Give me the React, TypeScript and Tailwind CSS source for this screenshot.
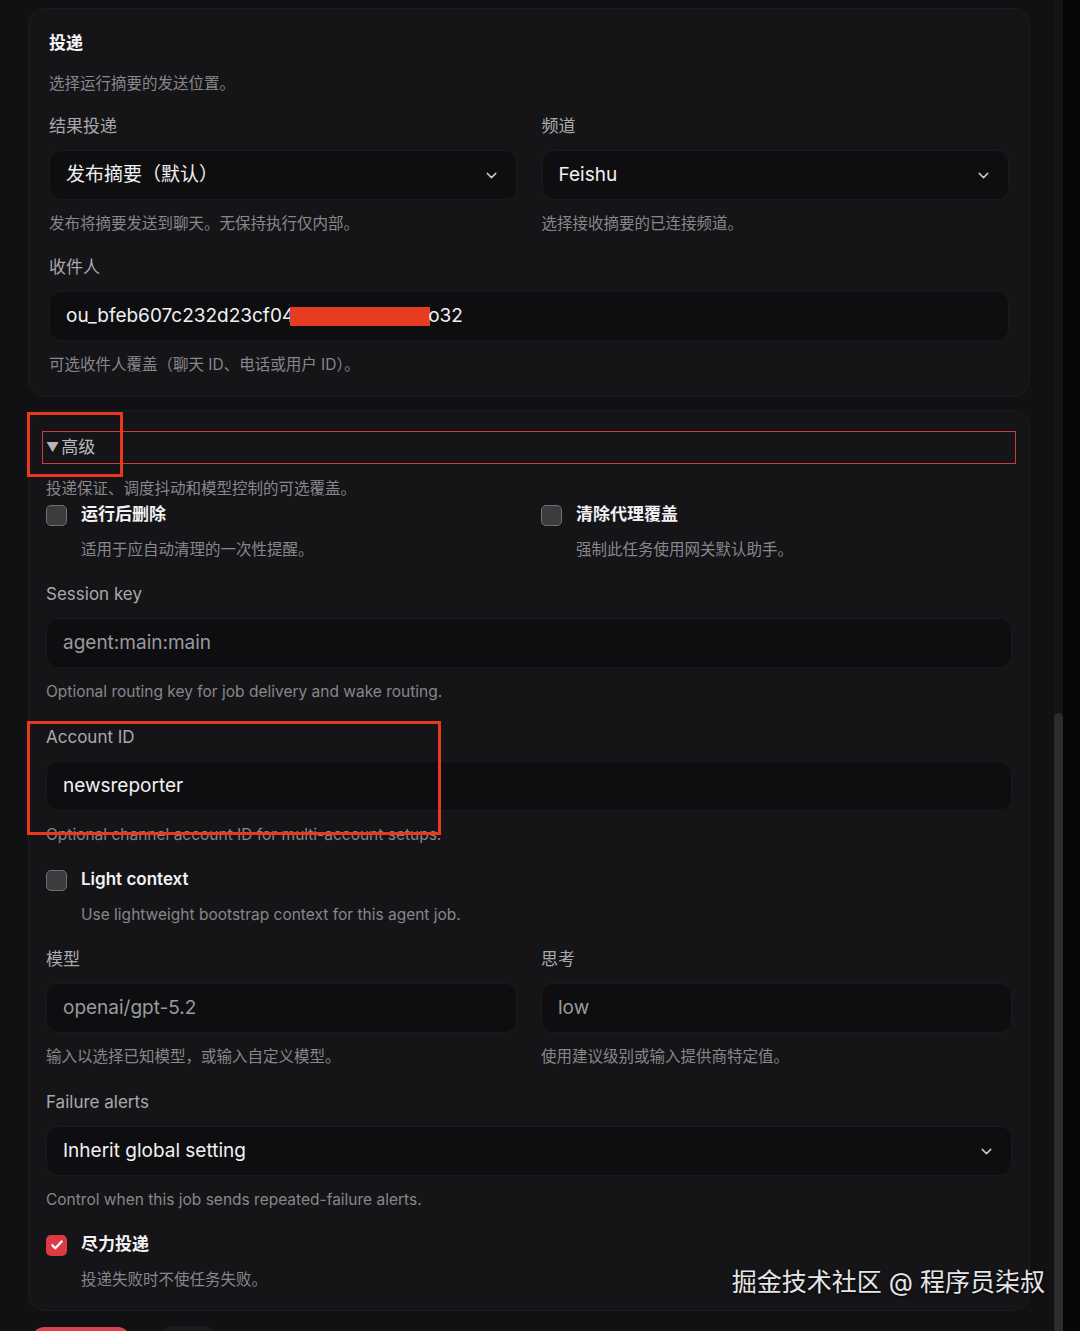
import { ChevronDown } from "lucide-react";
import type { ReactNode } from "react";

const font = "font-['Inter','Noto_Sans_CJK_SC',sans-serif]";

function Label({ children }: { children: ReactNode }) {
  return <div className="text-[17px] leading-6 text-[#a9a9ad]">{children}</div>;
}

function Help({ children }: { children: ReactNode }) {
  return <div className="mt-[14px] text-[15.5px] leading-5 text-[#87878c]">{children}</div>;
}

function Box({ children, muted, select }: { children: ReactNode; muted?: boolean; select?: boolean }) {
  return (
    <div
      className={
        "mt-3 flex h-[50px] items-center justify-between rounded-xl border border-[#1a1a1e] bg-[#0e0e10] pl-4 pr-4 text-[19px] " +
        (muted ? "text-[#9a9a9f]" : "text-[#f1f1f3]")
      }
    >
      <div className="flex items-center">{children}</div>
      {select && <ChevronDown size={17} strokeWidth={2} className="text-[#c9c9cd]" />}
    </div>
  );
}

function Check({ label, help, checked }: { label: string; help: string; checked?: boolean }) {
  return (
    <div>
      <div className="flex h-6 items-center gap-[14px]">
        {checked ? (
          <div className="flex h-[21px] w-[21px] items-center justify-center rounded-[5px] bg-[#de3a43]">
            <svg width="14" height="14" viewBox="0 0 24 24" fill="none" stroke="white" strokeWidth="4" strokeLinecap="round" strokeLinejoin="round">
              <path d="M4 12.5l5 5L20 6" />
            </svg>
          </div>
        ) : (
          <div className="h-[21px] w-[21px] rounded-[5px] border border-[#707074] bg-[#3c3c3f]" />
        )}
        <span className="text-[17px] font-semibold text-[#f2f2f4]">{label}</span>
      </div>
      <div className="mt-[13px] pl-[35px] text-[15.5px] leading-5 text-[#87878c]">{help}</div>
    </div>
  );
}

export default function App() {
  return (
    <div className={"relative flex h-[1331px] w-[1080px] overflow-hidden bg-[#111113] " + font}>
      {/* main scroll area */}
      <div className="w-[1054px] shrink-0">
        {/* Delivery card */}
        <section className="ml-7 mt-2 w-[1002px] rounded-2xl border border-[#1c1c20] bg-[#151518] px-5 pb-[21px] pt-[22px]">
          <h2 className="text-[17px] font-bold leading-6 text-[#f4f4f6]">投递</h2>
          <p className="mt-[19px] text-[15.5px] leading-5 text-[#87878c]">选择运行摘要的发送位置。</p>
          <div className="mt-5 grid grid-cols-2 gap-x-[25px]">
            <div>
              <Label>结果投递</Label>
              <Box select>发布摘要（默认）</Box>
              <Help>发布将摘要发送到聊天。无保持执行仅内部。</Help>
            </div>
            <div>
              <Label>频道</Label>
              <Box select>Feishu</Box>
              <Help>选择接收摘要的已连接频道。</Help>
            </div>
          </div>
          <div className="mt-[21px]">
            <Label>收件人</Label>
            <Box>
              <span>ou_bfeb607c232d23cf04</span>
              <span className="-ml-[4px] inline-block h-[19px] w-[140px] bg-[#e63c22]" />
              <span className="-ml-[2px]">o32</span>
            </Box>
            <Help>可选收件人覆盖（聊天 ID、电话或用户 ID）。</Help>
          </div>
        </section>

        {/* Advanced card */}
        <section className="ml-7 mt-[13px] w-[1002px] rounded-2xl border border-[#1c1c20] bg-[#151518] px-[17px] pb-5 pt-[24px]">
          {/* focused summary row */}
          <div className="-m-1 border border-[#c83c3c] p-[3px]">
            <div className="flex h-[25px] items-center text-[17px] text-[#b8b8bc]">
              <span className="mr-[2px] text-[13px]">▼</span>高级
            </div>
          </div>
          <p className="mt-[19px] text-[15.5px] leading-5 text-[#87878c]">投递保证、调度抖动和模型控制的可选覆盖。</p>
          <div className="mt-1 grid grid-cols-2 gap-x-6">
            <Check label="运行后删除" help="适用于应自动清理的一次性提醒。" />
            <Check label="清除代理覆盖" help="强制此任务使用网关默认助手。" />
          </div>
          <div className="mt-[22px]">
            <Label>Session key</Label>
            <Box muted>agent:main:main</Box>
            <Help>Optional routing key for job delivery and wake routing.</Help>
          </div>
          <div className="mt-[23px]">
            <Label>Account ID</Label>
            <Box>newsreporter</Box>
            <Help>Optional channel account ID for multi-account setups.</Help>
          </div>
          <div className="mt-[23px]">
            <Check label="Light context" help="Use lightweight bootstrap context for this agent job." />
          </div>
          <div className="mt-[22px] grid grid-cols-2 gap-x-6">
            <div>
              <Label>模型</Label>
              <Box muted>openai/gpt-5.2</Box>
              <Help>输入以选择已知模型，或输入自定义模型。</Help>
            </div>
            <div>
              <Label>思考</Label>
              <Box muted>low</Box>
              <Help>使用建议级别或输入提供商特定值。</Help>
            </div>
          </div>
          <div className="mt-[23px]">
            <Label>Failure alerts</Label>
            <Box select>Inherit global setting</Box>
            <Help>Control when this job sends repeated-failure alerts.</Help>
          </div>
          <div className="mt-[23px]">
            <Check checked label="尽力投递" help="投递失败时不使任务失败。" />
          </div>
        </section>

        {/* action buttons (cut off) */}
        <div className="ml-8 mt-[16px] flex gap-[30px]">
          <div className="h-10 w-[98px] rounded-xl bg-[#d8404a]" />
          <div className="mt-[-1px] h-10 w-[55px] rounded-xl bg-[#1b1b1f]" />
        </div>
      </div>

      {/* scrollbar */}
      <div className="w-[9px] shrink-0 bg-[#141416]">
        <div className="h-[713px]" />
        <div className="h-[640px] rounded-full bg-[#2c2c2f]" />
      </div>
      <div className="flex-1 bg-[#060606]" />

      {/* annotation overlays */}
      <div className="absolute left-[27px] top-[412px] h-[65px] w-[96px] border-[3px] border-[#e8391f]" />
      <div className="absolute left-[27px] top-[721px] h-[114px] w-[414px] border-[3px] border-[#e8391f]" />

      {/* watermark */}
      <div className="absolute right-[35px] top-[1267px] text-[25px] leading-[30px] text-[#e6e6e6] [text-shadow:0_1px_3px_rgba(0,0,0,0.9)]">
        掘金技术社区 @ 程序员柒叔
      </div>
    </div>
  );
}
